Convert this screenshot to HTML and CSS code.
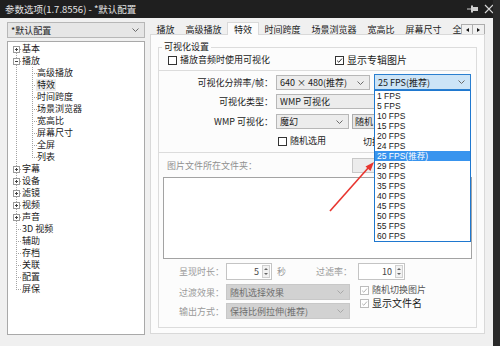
FILE: index.html
```html
<!DOCTYPE html>
<html lang="zh-CN">
<head>
  <meta charset="UTF-8">
  <title>参数选项</title>
  <link rel="stylesheet" href="styles.css">
</head>
<body>
  <div class="window">
    <div class="titlebar">
      <span class="title">参数选项(1.7.8556) - *默认配置</span>
      <span class="tb-icons">
        <svg width="12" height="8" viewBox="0 0 12 8"><path d="M0 4h4" stroke="#cfcfcf" stroke-width="1"/><rect x="4" y="0.5" width="2" height="7" fill="#cfcfcf"/><rect x="6" y="2" width="5" height="4" fill="#cfcfcf"/></svg>
        <svg width="10" height="10" viewBox="0 0 10 10"><path d="M1 1L9 9M9 1L1 9" stroke="#d6d6d6" stroke-width="1.2"/></svg>
      </span>
    </div>
    <div class="body">
      <aside class="sidebar">
        <div class="combo profile"><span>*默认配置</span><svg class="chev" viewBox="0 0 7 4"><path d="M0.5 0.5L3.5 3.5L6.5 0.5"/></svg></div>
        <ul class="tree">
          <li><span class="c0 first"><i class="exp plus"></i></span>基本</li>
          <li><span class="c0 tee"><i class="exp"></i></span>播放</li>
          <li><span class="c0 pipe"></span><span class="c1 tee"></span>高级播放</li>
          <li><span class="c0 pipe"></span><span class="c1 tee"></span><span class="sel">特效</span></li>
          <li><span class="c0 pipe"></span><span class="c1 tee"></span>时间跨度</li>
          <li><span class="c0 pipe"></span><span class="c1 tee"></span>场景浏览器</li>
          <li><span class="c0 pipe"></span><span class="c1 tee"></span>宽高比</li>
          <li><span class="c0 pipe"></span><span class="c1 tee"></span>屏幕尺寸</li>
          <li><span class="c0 pipe"></span><span class="c1 tee"></span>全屏</li>
          <li><span class="c0 pipe"></span><span class="c1 ell"></span>列表</li>
          <li><span class="c0 tee"><i class="exp plus"></i></span>字幕</li>
          <li><span class="c0 tee"><i class="exp plus"></i></span>设备</li>
          <li><span class="c0 tee"><i class="exp plus"></i></span>滤镜</li>
          <li><span class="c0 tee"><i class="exp plus"></i></span>视频</li>
          <li><span class="c0 tee"><i class="exp plus"></i></span>声音</li>
          <li><span class="c0 tee"></span>3D 视频</li>
          <li><span class="c0 tee"></span>辅助</li>
          <li><span class="c0 tee"></span>存档</li>
          <li><span class="c0 tee"></span>关联</li>
          <li><span class="c0 tee"></span>配置</li>
          <li><span class="c0 ell"></span>屏保</li>
        </ul>
      </aside>

      <section class="options">
        <div class="tabbar">
          <div class="tabs">
            <span class="tab">播放</span>
            <span class="tab">高级播放</span>
            <span class="tab on">特效</span>
            <span class="tab">时间跨度</span>
            <span class="tab">场景浏览器</span>
            <span class="tab">宽高比</span>
            <span class="tab">屏幕尺寸</span>
            <span class="tab last">全屏</span>
          </div>
          <div class="tab-scroll">
            <span class="sbtn"><i class="tri-l"></i></span>
            <span class="sbtn"><i class="tri-r"></i></span>
          </div>
        </div>

        <div class="page">
          <fieldset class="group">
            <legend>可视化设置</legend>
            <div class="row checks">
              <label class="check first-check"><span class="cb"></span>播放音频时使用可视化</label>
              <label class="check big"><span class="cb"><svg viewBox="0 0 8 8"><path d="M1.3 4.2L3.2 6L6.8 1.8"/></svg></span>显示专辑图片</label>
            </div>
            <div class="sep"></div>

            <div class="field">
              <span class="lbl">可视化分辨率/帧：</span>
              <div class="combo res"><span>640 × 480(推荐)</span><svg class="chev" viewBox="0 0 7 4"><path d="M0.5 0.5L3.5 3.5L6.5 0.5"/></svg></div>
              <div class="combo fps"><span>25 FPS(推荐)</span><svg class="chev" viewBox="0 0 7 4"><path d="M0.5 0.5L3.5 3.5L6.5 0.5"/></svg></div>
            </div>
            <div class="field gap4">
              <span class="lbl">可视化类型：</span>
              <div class="combo type"><span>WMP 可视化</span></div>
            </div>
            <div class="field gap5">
              <span class="lbl">WMP 可视化：</span>
              <div class="combo wmp"><span>魔幻</span><svg class="chev" viewBox="0 0 7 4"><path d="M0.5 0.5L3.5 3.5L6.5 0.5"/></svg></div>
              <span class="btn rand">随机</span>
            </div>
            <div class="row rand-row">
              <label class="check"><span class="cb"></span>随机选用</label>
              <span class="switch">切换</span>
            </div>
            <div class="sep sep2"></div>

            <div class="row folder-row">
              <span class="folder-lbl">图片文件所在文件夹：</span>
              <span class="btn browse"></span>
            </div>
            <div class="listbox"></div>

            <div class="row spin-row">
              <span class="lbl2">呈现时长：</span>
              <div class="spin w46"><span>5</span><span class="arrows"><i class="up"></i><i class="down"></i></span></div>
              <span class="unit">秒</span>
              <span class="lbl3">过滤率：</span>
              <div class="spin w47"><span>10</span><span class="arrows"><i class="up"></i><i class="down"></i></span></div>
            </div>
            <div class="lower">
              <div class="lower-left">
                <div class="row sel-row">
                  <span class="lbl2">过渡效果：</span>
                  <div class="combo dis"><span>随机选择效果</span><svg class="chev" viewBox="0 0 7 4"><path d="M0.5 0.5L3.5 3.5L6.5 0.5"/></svg></div>
                </div>
                <div class="row sel-row second">
                  <span class="lbl2">输出方式：</span>
                  <div class="combo dis"><span>保持比例拉伸(推荐)</span><svg class="chev" viewBox="0 0 7 4"><path d="M0.5 0.5L3.5 3.5L6.5 0.5"/></svg></div>
                </div>
              </div>
              <div class="lower-right">
                <label class="check dim"><span class="cb"><svg viewBox="0 0 8 8"><path d="M1.3 4.2L3.2 6L6.8 1.8"/></svg></span>随机切换图片</label>
                <label class="check big dimbox"><span class="cb"><svg viewBox="0 0 8 8"><path d="M1.3 4.2L3.2 6L6.8 1.8"/></svg></span>显示文件名</label>
              </div>
            </div>
          </fieldset>

          <!-- open dropdown of the fps combo -->
          <ul class="fps-list">
            <li>1 FPS</li>
            <li>5 FPS</li>
            <li>10 FPS</li>
            <li>15 FPS</li>
            <li>20 FPS</li>
            <li>24 FPS</li>
            <li class="hl">25 FPS(推荐)</li>
            <li>29 FPS</li>
            <li>30 FPS</li>
            <li>35 FPS</li>
            <li>40 FPS</li>
            <li>45 FPS</li>
            <li>50 FPS</li>
            <li>55 FPS</li>
            <li>60 FPS</li>
          </ul>

          <svg class="arrow" width="60" height="70" viewBox="0 0 60 70">
            <path d="M9 56L48 12" stroke="#e8352f" stroke-width="1.6"/>
            <polygon points="53,7 49.5,16 44.5,11.5" fill="#e8352f"/>
          </svg>
        </div>
      </section>
    </div>
  </div>
</body>
</html>
```

FILE: styles.css
```css
* { box-sizing: border-box; }
body {
  margin: 0;
  background: #2a2a2a;
  font-family: "Noto Sans CJK SC", sans-serif;
  font-size: 9px;
  color: #1a1a1a;
}
.window {
  width: 493px;
  height: 346px;
  background: #f0f0f0;
  overflow: hidden;
}
.titlebar {
  height: 18px;
  background: #1f1f1f;
  display: flex;
  align-items: center;
  padding: 0 6px 0 5px;
  color: #e4e4e4;
  font-size: 9.5px;
  width: 500px;
}
.title { flex: 1; }
.tb-icons { display: flex; align-items: center; gap: 5px; }
.body { display: flex; padding-top: 4px; }

/* left side */
.sidebar { width: 138px; margin-left: 7px; flex: none; }
.combo {
  display: flex;
  align-items: center;
  justify-content: space-between;
  height: 15px;
  border: 1px solid #b7b7b7;
  background: #ececec;
  padding: 0 5px 0 3px;
  line-height: 13px;
  white-space: nowrap;
  overflow: hidden;
}
.chev { width: 7px; height: 4px; flex: none; }
.chev path { fill: none; stroke: #6a6a6a; stroke-width: 1; }
.profile { height: 16px; background: #e6e6e6; }
.tree {
  list-style: none;
  margin: 3px 0 0;
  padding: 1px 0 0;
  height: 294px;
  border: 1px solid #a9a9a9;
  background: #fff;
}
.tree li { display: flex; height: 12px; line-height: 12px; white-space: nowrap; }
.tree .sel { background: #ececec; padding: 0 1px; margin-left: -1px; }
.c0 { width: 14px; height: 12px; flex: none; }
.c1 { width: 15px; height: 12px; flex: none; }
.tee {
  background:
    repeating-linear-gradient(180deg, #a3a3a3 0 1px, transparent 1px 2px) 8px 0 / 1px 12px no-repeat,
    repeating-linear-gradient(90deg, #a3a3a3 0 1px, transparent 1px 2px) 8px 6px / 6px 1px no-repeat;
}
.first {
  background:
    repeating-linear-gradient(180deg, #a3a3a3 0 1px, transparent 1px 2px) 8px 6px / 1px 6px no-repeat,
    repeating-linear-gradient(90deg, #a3a3a3 0 1px, transparent 1px 2px) 8px 6px / 6px 1px no-repeat;
}
.ell {
  background:
    repeating-linear-gradient(180deg, #a3a3a3 0 1px, transparent 1px 2px) 8px 0 / 1px 7px no-repeat,
    repeating-linear-gradient(90deg, #a3a3a3 0 1px, transparent 1px 2px) 8px 6px / 6px 1px no-repeat;
}
.pipe {
  background: repeating-linear-gradient(180deg, #a3a3a3 0 1px, transparent 1px 2px) 8px 0 / 1px 12px no-repeat;
}
.c1.tee {
  background:
    repeating-linear-gradient(180deg, #a3a3a3 0 1px, transparent 1px 2px) 10px 0 / 1px 12px no-repeat,
    repeating-linear-gradient(90deg, #a3a3a3 0 1px, transparent 1px 2px) 10px 6px / 5px 1px no-repeat;
}
.c1.ell {
  background:
    repeating-linear-gradient(180deg, #a3a3a3 0 1px, transparent 1px 2px) 10px 0 / 1px 7px no-repeat,
    repeating-linear-gradient(90deg, #a3a3a3 0 1px, transparent 1px 2px) 10px 6px / 5px 1px no-repeat;
}
.exp {
  display: block;
  width: 7px;
  height: 7px;
  margin: 3px 0 0 5px;
  border: 1px solid #9a9a9a;
  background: linear-gradient(#444, #444) center / 3px 1px no-repeat, #fff;
}
.exp.plus {
  background:
    linear-gradient(#444, #444) center / 3px 1px no-repeat,
    linear-gradient(#444, #444) center / 1px 3px no-repeat,
    #fff;
}

/* right side */
.options { width: 335px; margin-left: 5px; flex: none; }
.tabbar { display: flex; height: 13px; margin-bottom: -1px; }
.tabs { display: flex; width: 311px; overflow: hidden; white-space: nowrap; padding-left: 1px; }
.tab { flex: none; padding: 0 5.5px; line-height: 12px; margin-top: 2px; }
.tab.last { width: 15px; overflow: hidden; padding-right: 0; }
.tab.on {
  margin-top: 0;
  height: 14px;
  line-height: 13px;
  padding: 0 6px;
  background: #fcfcfc;
  border: 1px solid #d9d9d9;
  border-bottom: 0;
  position: relative;
  z-index: 1;
}
.tab-scroll { display: flex; margin-top: 2px; height: 11px; }
.sbtn {
  width: 12px;
  height: 11px;
  border: 1px solid #adadad;
  background: #f0f0f0;
  display: flex;
  align-items: center;
  justify-content: center;
}
.sbtn + .sbtn { border-left: 0; }
.tri-l { border-right: 3px solid #111; border-top: 2.5px solid transparent; border-bottom: 2.5px solid transparent; }
.tri-r { border-left: 3px solid #111; border-top: 2.5px solid transparent; border-bottom: 2.5px solid transparent; }

.page {
  position: relative;
  height: 300px;
  border: 1px solid #d9d9d9;
  background: #fcfcfc;
}
.group {
  margin: 6px 7px 0 7px;
  padding: 0 0 8px;
  border: 1px solid #dcdcdc;
  min-width: 0;
}
.group legend { padding: 0 2px; margin-left: 3px; line-height: 12px; }
.row { display: flex; align-items: center; white-space: nowrap; }
.checks { height: 12px; margin-top: 1px; }
.check { display: flex; align-items: center; line-height: 12px; }
.check.big { font-size: 10px; }
.cb {
  width: 9px;
  height: 9px;
  border: 1px solid #333;
  background: #fff;
  margin-right: 3px;
  flex: none;
  display: flex;
}
.cb svg { width: 7px; height: 7px; }
.cb path { fill: none; stroke: #222; stroke-width: 1.1; }
.first-check { margin-left: 9px; width: 167px; }
.sep { height: 1px; background: #dcdcdc; margin: 4px 6px 0 0; }
.sep2 { margin-top: 5px; }

.field { display: flex; align-items: center; height: 15px; margin-top: 4px; }
.field.gap4 { margin-top: 4px; }
.field.gap5 { margin-top: 5px; }
.lbl { width: 114px; text-align: right; margin-right: 3px; flex: none; white-space: nowrap; }
.res { width: 94px; }
.fps { width: 97px; margin-left: 4px; background: #cce4f7; border-color: #2a7fd0; height: 16px; margin-top: -1px; }
.type { width: 98px; border-right: 0; }
.wmp { width: 73px; }
.btn {
  height: 15px;
  line-height: 13px;
  border: 1px solid #adadad;
  background: #e6e6e6;
  padding: 0 2px;
  overflow: hidden;
  white-space: nowrap;
}
.rand { margin-left: 3px; width: 22px; border-right: 0; }
.rand-row { height: 12px; margin-top: 6px; }
.rand-row .check { margin-left: 119px; }
.switch { margin-left: 37px; width: 13px; overflow: hidden; }

.folder-row { height: 15px; margin-top: 5px; }
.folder-lbl { margin-left: 8px; width: 185px; color: #909090; }
.browse { width: 22px; border-right: 0; background: #ececec; border-color: #c8c8c8; }
.listbox {
  height: 82px;
  margin: 4px 4px 0 4px;
  border: 1px solid #a3a3a3;
  background: #fff;
}

.spin-row { height: 17px; margin-top: 4px; color: #999; }
.lbl2 { width: 65px; text-align: right; margin-right: 2px; flex: none; color: #9a9a9a; }
.spin {
  display: flex;
  justify-content: flex-end;
  align-items: center;
  height: 17px;
  border: 1px solid #c4c4c4;
  background: #fff;
  color: #444;
  padding-right: 1px;
}
.w46 { width: 46px; }
.w47 { width: 47px; margin-left: 6px; }
.spin > span:first-child { margin-right: 3px; }
.arrows {
  display: flex;
  flex-direction: column;
  justify-content: space-around;
  align-items: center;
  width: 8px;
  height: 13px;
  border: 1px solid #d0d0d0;
  background: #f2f2f2;
}
.up { border-bottom: 2px solid #666; border-left: 2px solid transparent; border-right: 2px solid transparent; }
.down { border-top: 2px solid #666; border-left: 2px solid transparent; border-right: 2px solid transparent; }
.unit { margin-left: 5px; }
.lbl3 { margin-left: 30px; width: 36px; color: #9a9a9a; }

.lower { display: flex; margin-top: 4px; }
.sel-row { height: 16px; }
.sel-row.second { margin-top: 3px; }
.combo.dis { width: 124px; height: 16px; background: #d2d2d2; border-color: #c8c8c8; color: #6e6e6e; }
.combo.dis .chev path { stroke: #a8a8a8; }
.lower-right { margin-left: 10px; display: flex; flex-direction: column; gap: 1px; }
.check.dim { color: #555; }
.check.dim .cb, .dimbox .cb { border-color: #bcbcbc; }
.check.dim .cb path, .dimbox .cb path { stroke: #b0b0b0; }

/* open list & callout arrow lie over the page */
.fps-list {
  position: absolute;
  left: 223px;
  top: 55px;
  width: 97px;
  margin: 0;
  padding: 0;
  list-style: none;
  background: #fff;
  border: 1px solid #1f78cf;
  font-family: "Liberation Sans", "Noto Sans CJK SC", sans-serif;
  font-size: 8.5px;
  z-index: 2;
}
.fps-list li { height: 10px; line-height: 10px; padding-left: 2px; }
.fps-list li.hl { background: #3894ee; color: #fff; }
.arrow { position: absolute; left: 170px; top: 120px; z-index: 3; }
```
